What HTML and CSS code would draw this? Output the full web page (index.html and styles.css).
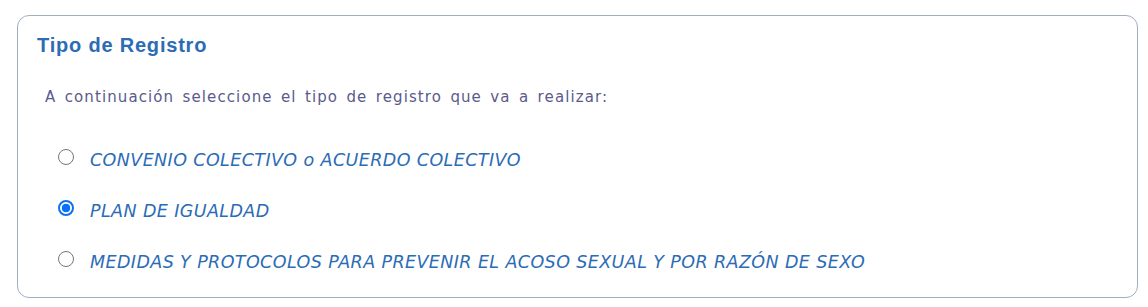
FILE: index.html
```html
<!DOCTYPE html>
<html lang="es">
<head>
<meta charset="utf-8">
<title>Tipo de Registro</title>
<link rel="stylesheet" href="styles.css">
</head>
<body>
<section class="panel">
  <h2 class="panel-title">Tipo de Registro</h2>
  <p class="panel-desc">A continuación seleccione el tipo de registro que va a realizar:</p>
  <div class="options">
    <label class="option"><input type="radio" name="tipo" value="convenio"><span>CONVENIO COLECTIVO o ACUERDO COLECTIVO</span></label>
    <label class="option"><input type="radio" name="tipo" value="plan" checked><span>PLAN DE IGUALDAD</span></label>
    <label class="option"><input type="radio" name="tipo" value="medidas"><span>MEDIDAS Y PROTOCOLOS PARA PREVENIR EL ACOSO SEXUAL Y POR RAZÓN DE SEXO</span></label>
  </div>
</section>
</body>
</html>
```
FILE: styles.css
```css
html, body {
  margin: 0;
  padding: 0;
  background: #ffffff;
}
body {
  padding: 15px 10px 0 17px;
}
.panel {
  box-sizing: border-box;
  width: 1121px;
  height: 283px;
  border: 1px solid #9eaec3;
  border-radius: 12px;
  padding: 17px 0 0 19px;
}
.panel-title {
  margin: 0;
  font-family: "Liberation Sans", Arial, sans-serif;
  font-weight: bold;
  font-size: 20px;
  line-height: 24px;
  color: #2b6cb5;
  letter-spacing: 0.8px;
}
.panel-desc {
  margin: 30px 0 0 8px;
  font-family: "DejaVu Sans", Verdana, sans-serif;
  font-size: 15px;
  line-height: 20px;
  color: #5a5a8c;
  letter-spacing: 1.1px;
  word-spacing: 2.5px;
}
.options {
  margin: 41px 0 0 21px;
  display: flex;
  flex-direction: column;
  gap: 27px;
}
.option {
  display: flex;
  align-items: flex-start;
  gap: 16px;
  font-family: "DejaVu Sans", Verdana, sans-serif;
  font-style: italic;
  font-size: 17.5px;
  line-height: 24px;
  color: #2b6cb5;
  letter-spacing: 0.4px;
}
.option input {
  appearance: none;
  -webkit-appearance: none;
  box-sizing: border-box;
  margin: 1px 0 0 0;
  width: 16px;
  height: 16px;
  flex: none;
  border: 1.5px solid #767676;
  border-radius: 50%;
  background: #ffffff;
}
.option input:checked {
  border: 2px solid #0a72f2;
  background: radial-gradient(circle, #0a72f2 0 4px, #ffffff 4.6px);
}
```
